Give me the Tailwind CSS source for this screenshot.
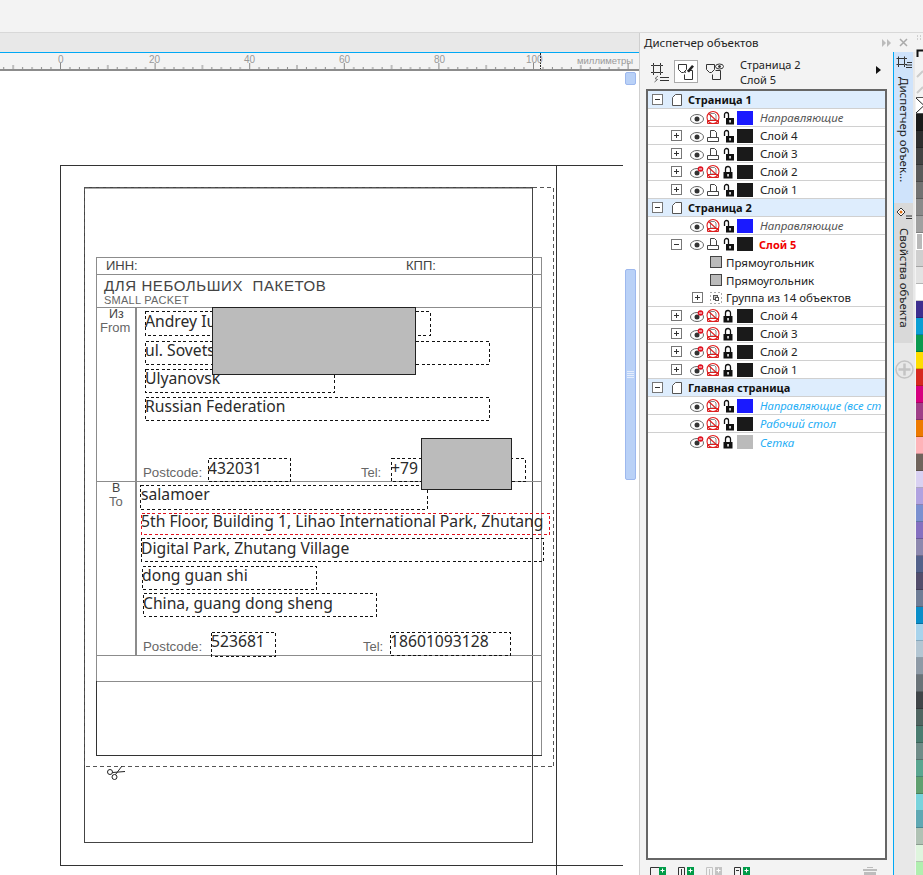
<!DOCTYPE html>
<html lang="ru">
<head>
  <meta charset="UTF-8" />
  <title>Диспетчер объектов</title>
  <script src="https://cdn.jsdelivr.net/npm/@tailwindcss/browser@4"></script>
</head>
<body class="w-[923px] h-[875px] overflow-hidden bg-[#f3f3f3] font-['Noto_Sans',sans-serif] text-[11px] text-[#222]">
  <!-- icon set -->
  <svg class="hidden">
    <symbol id="eye" viewBox="0 0 16 16"><ellipse cx="8" cy="9" rx="6.500" ry="4.500" fill="#fff" stroke="#666"/><circle cx="8" cy="9" r="2.500" fill="#333"/></symbol>
    <symbol id="eyeoff" viewBox="0 0 16 16"><ellipse cx="8" cy="9" rx="6.500" ry="4.500" fill="#fff" stroke="#666"/><circle cx="8" cy="9" r="2.500" fill="#333"/><circle cx="11.500" cy="5" r="2.800" fill="#e01020"/><path d="M10 5h3" stroke="#fff"/></symbol>
    <symbol id="print" viewBox="0 0 16 16"><path d="M5.500 2.500h4l2 2v5h-6zM2.500 9.500h11v4h-11z" fill="#fff" stroke="#444"/></symbol>
    <symbol id="noprint" viewBox="0 0 16 16"><path d="M5.500 3.500h4l1.500 1.500v5h-5.500z" fill="#fff" stroke="#888"/><path d="M2.500 10.500h11v3h-11z" fill="#fff" stroke="#d82020"/><circle cx="8" cy="7.500" r="6" fill="none" stroke="#e02020" stroke-width="1.100"/><path d="M3.500 3.500l9.500 8.500" stroke="#e02020" stroke-width="1.100"/></symbol>
    <symbol id="lock" viewBox="0 0 16 16"><path d="M4.500 8V4.500a2 2 0 0 1 4 0V8" fill="none" stroke="#111" stroke-width="1.300"/><rect x="6" y="8" width="8" height="6.500" fill="#111"/><rect x="9.300" y="10" width="1.500" height="2.500" fill="#fff"/></symbol>
    <symbol id="lockon" viewBox="0 0 16 16"><path d="M5.500 8V5a2.500 2.500 0 0 1 5 0v3" fill="none" stroke="#111" stroke-width="1.300"/><rect x="3.500" y="8" width="9" height="6.500" fill="#111"/><rect x="7.300" y="10" width="1.500" height="2.500" fill="#fff"/></symbol>
    <symbol id="plus" viewBox="0 0 11 11"><rect x=".5" y=".5" width="10" height="10" fill="#fff" stroke="#777"/><path d="M3 5.500h5M5.500 3v5" stroke="#333"/></symbol>
    <symbol id="minus" viewBox="0 0 11 11"><rect x=".5" y=".5" width="10" height="10" fill="#fff" stroke="#777"/><path d="M3 5.500h5" stroke="#333"/></symbol>
    <symbol id="page" viewBox="0 0 12 14"><path d="M4.500 1.500h6v11h-9v-8z" fill="#fff" stroke="#555"/></symbol>
  </svg>

  <div class="h-[33px] border-b border-[#d8d8d8] bg-[#f3f3f3]"></div>

  <div class="flex h-[842px]">
    <!-- document area -->
    <div class="w-[640px] shrink-0 flex flex-col border-r border-[#cfcfcf]">
      <div class="h-[19px] shrink-0 bg-[#e8e8e8]"></div>
      <div class="h-px shrink-0 bg-[#00a8f5]"></div>
      <div class="relative h-[18px] shrink-0 bg-[#f3f3f3] border-b-2 border-[#8c8c8c] text-[10px] leading-[12px] text-[#999] font-['Liberation_Sans',sans-serif]">
        <svg class="absolute left-0 top-0" width="638" height="16">
          <defs>
            <pattern id="ticks" patternUnits="userSpaceOnUse" x="60" y="0" width="94.600" height="16">
              <path d="M.5 10v6M47.800 12v4M9.960 14v2M19.400 14v2M28.900 14v2M38.300 14v2M57.200 14v2M66.700 14v2M76.100 14v2M85.600 14v2" stroke="#888" fill="none"/>
            </pattern>
          </defs>
          <rect x="0" y="0" width="634" height="16" fill="url(#ticks)"/>
          <path d="M540.500 0v16" stroke="#222" stroke-dasharray="2 1"/>
        </svg>
        <span class="absolute left-[58px] top-[1px]">0</span>
        <span class="absolute left-[149px] top-[1px]">20</span>
        <span class="absolute left-[244px] top-[1px]">40</span>
        <span class="absolute left-[339px] top-[1px]">60</span>
        <span class="absolute left-[434px] top-[1px]">80</span>
        <span class="absolute left-[526px] top-[1px]">100</span>
        <span class="absolute left-[577px] top-[2px] text-[9.500px]">миллиметры</span>
      </div>

      <div class="relative flex-1 bg-white overflow-hidden">
        <svg class="absolute left-0 top-0" width="638" height="804" viewBox="0 71 638 804" fill="none" shape-rendering="crispEdges">
          <path d="M60.500 866V165.500H623M60 865.500H623M556.500 165V875" stroke="#333"/>
          <path d="M84.500 187.500H532.500V842.500H84.500Z" stroke="#444"/>
          <path d="M84 188.500H532" stroke="#aaa"/>
          <rect x="84.500" y="187.500" width="469" height="579" stroke="#555" stroke-dasharray="4 3"/>
          <path d="M96.500 681V257.500H541.500V755M96 274.500H542M96 307.500H542M96 481.500H542M96 655.500H542M96 681.500H542M135.500 307V656M136.500 307V656" stroke="#8c8c8c"/>
          <path d="M96.500 681V755.500H542" stroke="#333"/>
          <g stroke="#111" stroke-dasharray="3 2.400">
            <rect x="145.500" y="311.500" width="285" height="24"/>
            <rect x="145.500" y="341.500" width="344" height="23"/>
            <rect x="145.500" y="369.500" width="189" height="23"/>
            <rect x="145.500" y="397.500" width="344" height="23"/>
            <rect x="208.500" y="458.500" width="82" height="23"/>
            <rect x="391.500" y="458.500" width="134" height="23"/>
            <rect x="140.500" y="485.500" width="287" height="24"/>
            <rect x="141.500" y="538.500" width="402" height="23"/>
            <rect x="142.500" y="566.500" width="174" height="23"/>
            <rect x="143.500" y="593.500" width="233" height="23"/>
            <rect x="211.500" y="632.500" width="64" height="24"/>
            <rect x="390.500" y="632.500" width="120" height="23"/>
          </g>
          <rect x="141.500" y="513.500" width="408" height="21" stroke="#e0101c" stroke-dasharray="3 2.400"/>
          <g stroke="#222" shape-rendering="auto">
            <circle cx="110" cy="772" r="2.500"/>
            <circle cx="114.500" cy="777" r="2.500"/>
            <path d="M112.500 772.500L125 771.500M115.500 774.500L122 766"/>
          </g>
        </svg>

        <!-- label text on the sheet -->
        <div class="font-['Liberation_Sans',sans-serif] text-[#444]">
          <span class="absolute left-[106px] top-[187px] text-[13px] leading-[16px]">ИНН:</span>
          <span class="absolute left-[406px] top-[187px] text-[13px] leading-[16px]">КПП:</span>
          <span class="absolute left-[104px] top-[206px] text-[15px] leading-[18px] whitespace-pre tracking-[0.6px]">ДЛЯ НЕБОЛЬШИХ  ПАКЕТОВ</span>
          <span class="absolute left-[104px] top-[223px] text-[11px] leading-[12px] tracking-[0.25px] text-[#666]">SMALL PACKET</span>
          <span class="absolute left-[109px] top-[237px] text-[12.500px] leading-[12px]">Из</span>
          <span class="absolute left-[100px] top-[250px] text-[13px] leading-[14px] text-[#666]">From</span>
          <span class="absolute left-[143px] top-[395px] text-[13.300px] leading-[14px] text-[#666]">Postcode:</span>
          <span class="absolute left-[361px] top-[395px] text-[13px] leading-[14px] text-[#666]">Tel:</span>
          <span class="absolute left-[112px] top-[411px] text-[12.500px] leading-[12px]">В</span>
          <span class="absolute left-[109px] top-[424px] text-[13px] leading-[14px] text-[#666]">To</span>
          <span class="absolute left-[143px] top-[569px] text-[13.300px] leading-[14px] text-[#666]">Postcode:</span>
          <span class="absolute left-[363px] top-[569px] text-[13px] leading-[14px] text-[#666]">Tel:</span>
        </div>

        <!-- filled in values -->
        <div class="text-[15.700px] leading-[22px] text-[#2a2a2a] whitespace-nowrap">
          <span class="absolute left-[145px] top-[239px]">Andrey Iu</span>
          <span class="absolute left-[145px] top-[268px]">ul. Sovets</span>
          <span class="absolute left-[145px] top-[296px]">Ulyanovsk</span>
          <span class="absolute left-[145px] top-[324px]">Russian Federation</span>
          <span class="absolute left-[208px] top-[386px]">432031</span>
          <span class="absolute left-[391px] top-[386px]">+79</span>
          <span class="absolute left-[141px] top-[412px]">salamoer</span>
          <span class="absolute left-[141px] top-[439px]">5th Floor, Building 1, Lihao International Park, Zhutang</span>
          <span class="absolute left-[141px] top-[466px]">Digital Park, Zhutang Village</span>
          <span class="absolute left-[142px] top-[493px]">dong guan shi</span>
          <span class="absolute left-[143px] top-[521px]">China, guang dong sheng</span>
          <span class="absolute left-[211px] top-[559px]">523681</span>
          <span class="absolute left-[390px] top-[559px]">18601093128</span>
        </div>

        <!-- redaction boxes -->
        <div class="absolute left-[212px] top-[236px] w-[204px] h-[68px] bg-[#bbbbbb] border border-[#222]"></div>
        <div class="absolute left-[421px] top-[367px] w-[91px] h-[52px] bg-[#bbbbbb] border border-[#222]"></div>

        <!-- scrollbar -->
        <div class="absolute left-[625px] top-[1px] w-[11px] h-[13px] rounded-[2px] bg-[#b9d1f7] border border-[#9db8ee]"></div>
        <div class="absolute left-[625px] top-[198px] w-[11px] h-[211px] rounded-[2px] bg-[#b9d1f7] border border-[#9db8ee] flex items-center justify-center">
          <svg width="7" height="8" viewBox="0 0 7 8" stroke="#e4edfd"><path d="M0 .5h7M0 2.500h7M0 4.500h7M0 6.500h7"/></svg>
        </div>
      </div>
    </div>

    <!-- object manager docker -->
    <div class="w-[253px] shrink-0 flex flex-col bg-[#f3f3f3]">
      <div class="h-[19px] shrink-0 flex items-center justify-between pl-[4px] pr-[2px] text-[11.500px] leading-[19px]">
        <span>Диспетчер объектов</span>
        <svg width="9" height="8" viewBox="0 0 9 8" fill="#bbb"><path d="M0 0l4 4-4 4zM5 0l4 4-4 4z"/></svg>
      </div>
      <div class="relative h-[38px] shrink-0">
        <svg class="absolute left-[10px] top-[10px]" width="20" height="22" viewBox="0 0 20 22" fill="none" stroke="#333">
          <path d="M3.500 3.500h7v7h-7zM1 3.500h2M3.500 1v2M10.500 1v2M11 3.500h2M1 10.500h2M3.500 11v2M10.500 11v2M11 10.500h2"/>
          <path d="M10 15.500h9M10 18.500h9"/>
          <path d="M8 14l-3 2.500 2.500 1-3 2.500" stroke="#666"/>
        </svg>
        <div class="absolute left-[34px] top-[8px] w-[24px] h-[23px] border border-[#aaa] bg-white"></div>
        <svg class="absolute left-[37px] top-[11px]" width="19" height="18" viewBox="0 0 19 18" fill="none" stroke="#333">
          <path d="M1.500 1.500h8v5l-3 3h-2l-3-3z"/>
          <path d="M7.500 9.500h1v-1M10.500 7.500h5v9h-8v-5" />
          <path d="M10 8l5-6 2 1.500-5 6z" fill="#222" stroke="none"/>
        </svg>
        <svg class="absolute left-[65px] top-[11px]" width="20" height="18" viewBox="0 0 20 18" fill="none" stroke="#333">
          <path d="M1.500 1.500h8v5l-3 3h-2l-3-3z"/>
          <path d="M10.500 7.500h5v9h-8v-5"/>
          <ellipse cx="14.500" cy="3.500" rx="4" ry="2.500"/>
          <circle cx="14.500" cy="3.500" r="1" fill="#333"/>
        </svg>
        <div class="absolute left-[100px] top-[5px] text-[11px] leading-[15px]">
          <div>Страница 2</div>
          <div>Слой 5</div>
        </div>
        <svg class="absolute left-[236px] top-[14px]" width="5" height="8" viewBox="0 0 5 8" fill="#111"><path d="M0 0l5 4-5 4z"/></svg>
      </div>

      <div class="mx-[6px] w-[241px] h-[771px] shrink-0 overflow-hidden border-2 border-[#666] bg-white whitespace-nowrap text-[11.500px] leading-[17px] -mt-[1px]">
        <!-- page 1 -->
        <div class="flex items-center h-[18px] bg-[#deedfd] border-b border-[#d0d0d0] pl-[4px] text-[11px] font-bold text-[#111]"><svg class="w-[11px] h-[11px]"><use href="#minus"/></svg><svg class="w-3 h-[14px] ml-[8px]"><use href="#page"/></svg><span class="ml-[5px]">Страница 1</span></div>
        <div class="flex items-center h-[18px] border-b border-[#d0d0d0] pl-[41px]"><svg class="w-4 h-4"><use href="#eye"/></svg><svg class="w-4 h-4"><use href="#noprint"/></svg><svg class="w-4 h-4 -ml-px"><use href="#lock"/></svg><span class="ml-px w-4 h-[14px] bg-[#1a1aff]"></span><span class="ml-[7px] italic text-[#555]">Направляющие</span></div>
        <div class="flex items-center h-[18px] border-b border-[#d0d0d0] pl-[23px]"><svg class="w-[11px] h-[11px]"><use href="#plus"/></svg><svg class="w-4 h-4 ml-[7px]"><use href="#eye"/></svg><svg class="w-4 h-4"><use href="#print"/></svg><svg class="w-4 h-4 -ml-px"><use href="#lock"/></svg><span class="ml-px w-4 h-[14px] bg-[#1a1a1a]"></span><span class="ml-[7px]">Слой 4</span></div>
        <div class="flex items-center h-[18px] border-b border-[#d0d0d0] pl-[23px]"><svg class="w-[11px] h-[11px]"><use href="#plus"/></svg><svg class="w-4 h-4 ml-[7px]"><use href="#eye"/></svg><svg class="w-4 h-4"><use href="#print"/></svg><svg class="w-4 h-4 -ml-px"><use href="#lock"/></svg><span class="ml-px w-4 h-[14px] bg-[#1a1a1a]"></span><span class="ml-[7px]">Слой 3</span></div>
        <div class="flex items-center h-[18px] border-b border-[#d0d0d0] pl-[23px]"><svg class="w-[11px] h-[11px]"><use href="#plus"/></svg><svg class="w-4 h-4 ml-[7px]"><use href="#eyeoff"/></svg><svg class="w-4 h-4"><use href="#noprint"/></svg><svg class="w-4 h-4 -ml-px"><use href="#lockon"/></svg><span class="ml-px w-4 h-[14px] bg-[#1a1a1a]"></span><span class="ml-[7px]">Слой 2</span></div>
        <div class="flex items-center h-[18px] border-b border-[#d0d0d0] pl-[23px]"><svg class="w-[11px] h-[11px]"><use href="#plus"/></svg><svg class="w-4 h-4 ml-[7px]"><use href="#eye"/></svg><svg class="w-4 h-4"><use href="#print"/></svg><svg class="w-4 h-4 -ml-px"><use href="#lock"/></svg><span class="ml-px w-4 h-[14px] bg-[#1a1a1a]"></span><span class="ml-[7px]">Слой 1</span></div>
        <!-- page 2 -->
        <div class="flex items-center h-[18px] bg-[#deedfd] border-b border-[#d0d0d0] pl-[4px] text-[11px] font-bold text-[#111]"><svg class="w-[11px] h-[11px]"><use href="#minus"/></svg><svg class="w-3 h-[14px] ml-[8px]"><use href="#page"/></svg><span class="ml-[5px]">Страница 2</span></div>
        <div class="flex items-center h-[18px] border-b border-[#d0d0d0] pl-[41px]"><svg class="w-4 h-4"><use href="#eye"/></svg><svg class="w-4 h-4"><use href="#noprint"/></svg><svg class="w-4 h-4 -ml-px"><use href="#lock"/></svg><span class="ml-px w-4 h-[14px] bg-[#1a1aff]"></span><span class="ml-[7px] italic text-[#555]">Направляющие</span></div>
        <div class="flex items-center h-[18px] pl-[23px]"><svg class="w-[11px] h-[11px]"><use href="#minus"/></svg><svg class="w-4 h-4 ml-[7px]"><use href="#eye"/></svg><svg class="w-4 h-4"><use href="#print"/></svg><svg class="w-4 h-4 -ml-px"><use href="#lock"/></svg><span class="ml-px w-4 h-[14px] bg-[#1a1a1a]"></span><span class="ml-[6px] text-[11px] font-bold text-[#f00000]">Слой 5</span></div>
        <div class="flex items-center h-[18px] pl-[62px]"><span class="w-3 h-3 bg-[#bbbbbb] border border-[#444]"></span><span class="ml-[4px]">Прямоугольник</span></div>
        <div class="flex items-center h-[18px] pl-[62px]"><span class="w-3 h-3 bg-[#bbbbbb] border border-[#444]"></span><span class="ml-[4px]">Прямоугольник</span></div>
        <div class="flex items-center h-[18px] border-b border-[#d0d0d0] pl-[44px]"><svg class="w-[11px] h-[11px]"><use href="#plus"/></svg><svg class="ml-[7px]" width="12" height="12" viewBox="0 0 12 12" fill="none"><rect x=".5" y=".5" width="11" height="11" stroke="#555" stroke-dasharray="1 3"/><rect x="3.500" y="3.500" width="4" height="4" fill="#ccc" stroke="#555"/><rect x="5.500" y="5.500" width="3" height="3" fill="#fff" stroke="#555"/></svg><span class="ml-[4px]">Группа из 14 объектов</span></div>
        <div class="flex items-center h-[18px] border-b border-[#d0d0d0] pl-[23px]"><svg class="w-[11px] h-[11px]"><use href="#plus"/></svg><svg class="w-4 h-4 ml-[7px]"><use href="#eyeoff"/></svg><svg class="w-4 h-4"><use href="#noprint"/></svg><svg class="w-4 h-4 -ml-px"><use href="#lockon"/></svg><span class="ml-px w-4 h-[14px] bg-[#1a1a1a]"></span><span class="ml-[7px]">Слой 4</span></div>
        <div class="flex items-center h-[18px] border-b border-[#d0d0d0] pl-[23px]"><svg class="w-[11px] h-[11px]"><use href="#plus"/></svg><svg class="w-4 h-4 ml-[7px]"><use href="#eyeoff"/></svg><svg class="w-4 h-4"><use href="#noprint"/></svg><svg class="w-4 h-4 -ml-px"><use href="#lockon"/></svg><span class="ml-px w-4 h-[14px] bg-[#1a1a1a]"></span><span class="ml-[7px]">Слой 3</span></div>
        <div class="flex items-center h-[18px] border-b border-[#d0d0d0] pl-[23px]"><svg class="w-[11px] h-[11px]"><use href="#plus"/></svg><svg class="w-4 h-4 ml-[7px]"><use href="#eyeoff"/></svg><svg class="w-4 h-4"><use href="#noprint"/></svg><svg class="w-4 h-4 -ml-px"><use href="#lockon"/></svg><span class="ml-px w-4 h-[14px] bg-[#1a1a1a]"></span><span class="ml-[7px]">Слой 2</span></div>
        <div class="flex items-center h-[18px] border-b border-[#d0d0d0] pl-[23px]"><svg class="w-[11px] h-[11px]"><use href="#plus"/></svg><svg class="w-4 h-4 ml-[7px]"><use href="#eyeoff"/></svg><svg class="w-4 h-4"><use href="#noprint"/></svg><svg class="w-4 h-4 -ml-px"><use href="#lockon"/></svg><span class="ml-px w-4 h-[14px] bg-[#1a1a1a]"></span><span class="ml-[7px]">Слой 1</span></div>
        <!-- master page -->
        <div class="flex items-center h-[18px] bg-[#deedfd] border-b border-[#d0d0d0] pl-[4px] text-[11px] font-bold text-[#111]"><svg class="w-[11px] h-[11px]"><use href="#minus"/></svg><svg class="w-3 h-[14px] ml-[8px]"><use href="#page"/></svg><span class="ml-[5px]">Главная страница</span></div>
        <div class="flex items-center h-[18px] border-b border-[#d0d0d0] pl-[41px]"><svg class="w-4 h-4 shrink-0"><use href="#eye"/></svg><svg class="w-4 h-4 shrink-0"><use href="#noprint"/></svg><svg class="w-4 h-4 -ml-px shrink-0"><use href="#lock"/></svg><span class="ml-px w-4 h-[14px] shrink-0 bg-[#1a1aff]"></span><span class="ml-[7px] shrink-0 italic text-[11.200px] text-[#26aef5]">Направляющие (все ст</span></div>
        <div class="flex items-center h-[18px] border-b border-[#d0d0d0] pl-[41px]"><svg class="w-4 h-4"><use href="#eye"/></svg><svg class="w-4 h-4"><use href="#noprint"/></svg><svg class="w-4 h-4 -ml-px"><use href="#lock"/></svg><span class="ml-px w-4 h-[14px] bg-[#1a1a1a]"></span><span class="ml-[7px] italic text-[#26aef5]">Рабочий стол</span></div>
        <div class="flex items-center h-[18px] pl-[41px]"><svg class="w-4 h-4"><use href="#eyeoff"/></svg><svg class="w-4 h-4"><use href="#noprint"/></svg><svg class="w-4 h-4 -ml-px"><use href="#lockon"/></svg><span class="ml-px w-4 h-[14px] bg-[#bbbbbb]"></span><span class="ml-[7px] italic text-[#26aef5]">Сетка</span></div>
      </div>

      <div class="flex items-start h-[14px] pt-[7px] pl-[10px] relative">
        <svg width="16" height="8" viewBox="0 0 16 8" fill="none"><path d="M.5 8V.5h9" stroke="#333"/><rect x="9" width="7" height="8" fill="#009b48"/><path d="M10.500 3.500h4M12.500 1.500v4" stroke="#fff"/></svg>
        <svg class="ml-[12px]" width="16" height="8" viewBox="0 0 16 8" fill="none"><path d="M.5 8V.5h6V8M3.500 2v6" stroke="#333"/><rect x="9" width="7" height="8" fill="#009b48"/><path d="M10.500 3.500h4M12.500 1.500v4" stroke="#fff"/></svg>
        <svg class="ml-[12px]" width="16" height="8" viewBox="0 0 16 8" fill="none"><path d="M.5 8V.5h6V8M3.500 2v6" stroke="#c4c4c4"/><rect x="9" width="7" height="8" fill="#c4c4c4"/><path d="M10.500 3.500h4M12.500 1.500v4" stroke="#fff"/></svg>
        <svg class="ml-[12px]" width="16" height="8" viewBox="0 0 16 8" fill="none"><path d="M.5 8V.5h6V8M2 3.500h3" stroke="#333"/><rect x="9" width="7" height="8" fill="#009b48"/><path d="M10.500 3.500h4M12.500 1.500v4" stroke="#fff"/></svg>
        <svg class="absolute left-[223px] top-[7px]" width="14" height="8" viewBox="0 0 14 8" fill="#bdbdbd"><rect x="4" width="6" height="1"/><rect y="2" width="14" height="2"/><rect x="1" y="5" width="12" height="3"/></svg>
      </div>
    </div>

    <!-- docker tabs -->
    <div class="w-[22px] shrink-0 flex flex-col">
      <div class="h-[19px] shrink-0 flex items-center justify-center pr-[2px]">
        <svg width="9" height="9" viewBox="0 0 9 9" stroke="#aaa" stroke-width="1.500"><path d="M1 1l7 7M8 1L1 8"/></svg>
      </div>
      <div class="flex-1 flex flex-col bg-[#e8e8e8] border-l border-[#00a8f5]">
        <div class="w-[19px] h-[151px] shrink-0 bg-[#cfe3fb] flex flex-col items-center pt-[4px]">
          <svg width="16" height="14" viewBox="0 0 16 14" fill="none" stroke="#333"><path d="M2.500 2.500h6v6h-6zM.5 2.500h2M2.500.5v2M8.500.5v2M9 2.500h2M.5 8.500h2M2.500 9v2M8.500 9v2M9 8.500h2M10 11.500h6M10 9h6M11 6.500h5"/></svg>
          <span class="mt-[7px] [writing-mode:vertical-rl] text-[11.500px] leading-[16px] whitespace-nowrap">Диспетчер объек...</span>
        </div>
        <div class="w-[19px] h-[140px] shrink-0 bg-[#d9d9d9] flex flex-col items-center pt-[4px]">
          <svg width="16" height="14" viewBox="0 0 16 14" fill="none" stroke="#333"><path d="M1 5l4-4 4 4-4 4z" fill="#fff"/><circle cx="5" cy="5" r="1.500" fill="#e07010" stroke="none"/><path d="M10 11.500h6M10 9h6"/></svg>
          <span class="mt-[7px] [writing-mode:vertical-rl] text-[11.500px] leading-[16px] whitespace-nowrap">Свойства объекта</span>
        </div>
        <svg class="ml-[1px] mt-[17px]" width="19" height="19" viewBox="0 0 19 19" fill="none" stroke="#c4c4c4"><circle cx="9.500" cy="9.500" r="8.500" stroke-width="1.500"/><path d="M3.500 9.500h12M9.500 3.500v12" stroke-width="2.500"/></svg>
      </div>
    </div>

    <!-- colour palette -->
    <div class="flex-1 bg-[#f3f3f3] flex flex-col pl-px overflow-hidden">
      <div class="relative h-[64px] shrink-0">
        <svg class="absolute left-0 top-0" width="8" height="64" viewBox="0 0 8 64" fill="none">
          <path d="M1 3h1M4 3h1M1 6h1M4 6h1" stroke="#aaa"/>
          <path d="M1.500 24V17.500H8" stroke="#111" stroke-width="2"/>
          <path d="M1 44l6-6M1 60l6-6" stroke="#ccc" stroke-width="2"/>
        </svg>
      </div>
      <div class="flex flex-col">
        <div class="h-[17px] bg-white border-y border-[#555] overflow-hidden"><svg width="8" height="15" viewBox="0 0 8 15" fill="none" stroke="#222"><path d="M0 0l8 7.500-8 7.500"/></svg></div>
        <div class="h-[17px] bg-[#1a1a1a] border-b border-black/20"></div>
        <div class="h-[17px] bg-[#2e2e2e] border-b border-black/20"></div>
        <div class="h-[17px] bg-[#434343] border-b border-black/20"></div>
        <div class="h-[17px] bg-[#5a5a5a] border-b border-black/20"></div>
        <div class="h-[17px] bg-[#727272] border-b border-black/20"></div>
        <div class="h-[17px] bg-[#8a8a8a] border-b border-black/20"></div>
        <div class="h-[17px] bg-[#a0a0a0] border-b border-black/20"></div>
        <div class="h-[17px] bg-[#b9b9b9] border border-white"></div>
        <div class="h-[17px] bg-[#cfcfcf] border-b border-black/20"></div>
        <div class="h-[17px] bg-[#e3e3e3] border-b border-black/20"></div>
        <div class="h-[17px] bg-white border-b border-black/20"></div>
        <div class="h-[17px] bg-[#3d2f8f] border-b border-black/20"></div>
        <div class="h-[17px] bg-[#0a9fd4] border-b border-black/20"></div>
        <div class="h-[17px] bg-[#0a9a4f] border-b border-black/20"></div>
        <div class="h-[17px] bg-[#ffdd00] border-b border-black/20"></div>
        <div class="h-[17px] bg-[#d6291f] border-b border-black/20"></div>
        <div class="h-[17px] bg-[#d6007f] border-b border-black/20"></div>
        <div class="h-[17px] bg-[#a03f87] border-b border-black/20"></div>
        <div class="h-[17px] bg-[#ee7a00] border-b border-black/20"></div>
        <div class="h-[17px] bg-[#ffb3b8] border-b border-black/20"></div>
        <div class="h-[17px] bg-[#70645c] border-b border-black/20"></div>
        <div class="h-[17px] bg-[#d9d1f2] border-b border-black/20"></div>
        <div class="h-[17px] bg-[#b0a2e0] border-b border-black/20"></div>
        <div class="h-[17px] bg-[#7b90d0] border-b border-black/20"></div>
        <div class="h-[17px] bg-[#8570c0] border-b border-black/20"></div>
        <div class="h-[17px] bg-[#8d88ae] border-b border-black/20"></div>
        <div class="h-[17px] bg-[#53618a] border-b border-black/20"></div>
        <div class="h-[17px] bg-[#534d6b] border-b border-black/20"></div>
        <div class="h-[17px] bg-[#6f7d96] border-b border-black/20"></div>
        <div class="h-[17px] bg-[#0a8ec9] border-b border-black/20"></div>
        <div class="h-[17px] bg-[#a7d3ec] border-b border-black/20"></div>
        <div class="h-[17px] bg-[#b3c6d3] border-b border-black/20"></div>
        <div class="h-[17px] bg-[#8e9aa6] border-b border-black/20"></div>
        <div class="h-[17px] bg-[#6a7378] border-b border-black/20"></div>
        <div class="h-[17px] bg-[#404548] border-b border-black/20"></div>
        <div class="h-[17px] bg-[#506561] border-b border-black/20"></div>
        <div class="h-[17px] bg-[#4a7c70] border-b border-black/20"></div>
        <div class="h-[17px] bg-[#6f8c88] border-b border-black/20"></div>
        <div class="h-[17px] bg-[#5aa690] border-b border-black/20"></div>
        <div class="h-[17px] bg-[#60a070] border-b border-black/20"></div>
        <div class="h-[17px] bg-[#78d3dc] border-b border-black/20"></div>
        <div class="h-[17px] bg-[#5fa8b3] border-b border-black/20"></div>
        <div class="h-[17px] bg-[#b0c2b4] border-b border-black/20"></div>
        <div class="h-[17px] bg-[#dff5de] border-b border-black/20"></div>
        <div class="h-[17px] bg-[#b0efaf]"></div>
      </div>
    </div>
  </div>
</body>
</html>
